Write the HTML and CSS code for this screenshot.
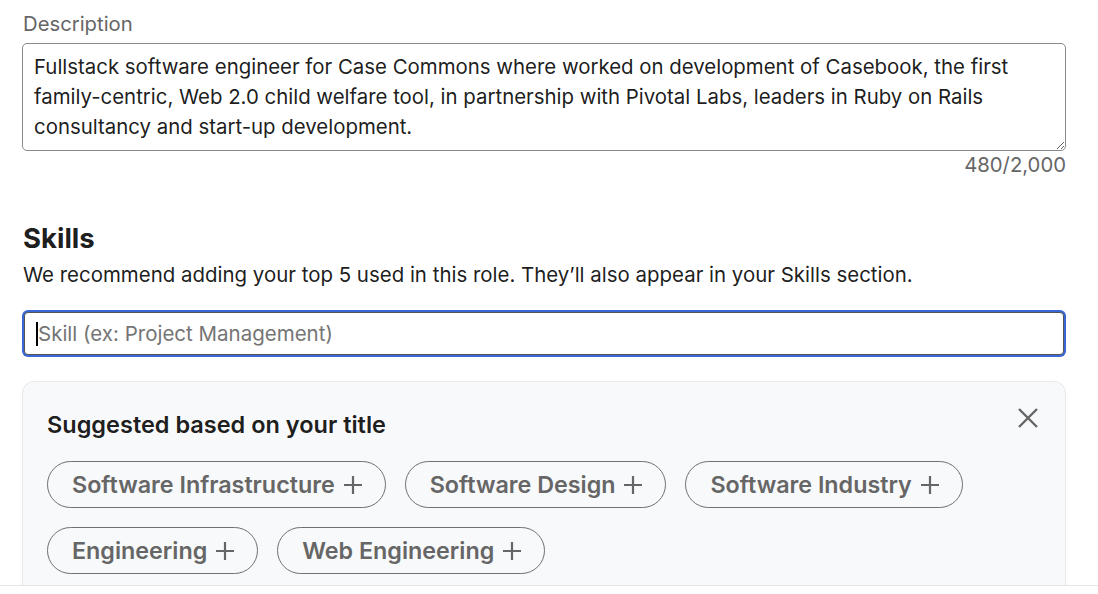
FILE: index.html
```html
<!DOCTYPE html>
<html lang="en">
<head>
<meta charset="utf-8">
<title>Edit position</title>
<link rel="stylesheet" href="styles.css">
</head>
<body>
<div class="scroll">
  <div class="content">
    <label class="label" for="desc">Description</label>
    <textarea id="desc" class="textarea" readonly>Fullstack software engineer for Case Commons where worked on development of Casebook, the first family-centric, Web 2.0 child welfare tool, in partnership with Pivotal Labs, leaders in Ruby on Rails consultancy and start-up development.</textarea>
    <div class="counter">480/2,000</div>

    <h2 class="heading">Skills</h2>
    <p class="sub">We recommend adding your top 5 used in this role. They’ll also appear in your Skills section.</p>
    <div class="input-wrap">
      <div class="input"><span class="caret"></span><span class="placeholder">Skill (ex: Project Management)</span></div>
    </div>

    <section class="card">
      <div class="card-head">
        <h3 class="card-title">Suggested based on your title</h3>
        <button class="close" aria-label="Dismiss">
          <svg width="24" height="24" viewBox="0 0 24 24"><path d="M3 3 L21 21 M21 3 L3 21" stroke="#666" stroke-width="2.4" fill="none"/></svg>
        </button>
      </div>
      <div class="pills">
        <button class="pill">Software Infrastructure <svg class="plus" width="20" height="20" viewBox="0 0 20 20"><path d="M10 1 V19 M1 10 H19" stroke="#666" stroke-width="2.2" fill="none"/></svg></button>
        <button class="pill">Software Design <svg class="plus" width="20" height="20" viewBox="0 0 20 20"><path d="M10 1 V19 M1 10 H19" stroke="#666" stroke-width="2.2" fill="none"/></svg></button>
        <button class="pill">Software Industry <svg class="plus" width="20" height="20" viewBox="0 0 20 20"><path d="M10 1 V19 M1 10 H19" stroke="#666" stroke-width="2.2" fill="none"/></svg></button>
        <button class="pill">Engineering <svg class="plus" width="20" height="20" viewBox="0 0 20 20"><path d="M10 1 V19 M1 10 H19" stroke="#666" stroke-width="2.2" fill="none"/></svg></button>
        <button class="pill">Web Engineering <svg class="plus" width="20" height="20" viewBox="0 0 20 20"><path d="M10 1 V19 M1 10 H19" stroke="#666" stroke-width="2.2" fill="none"/></svg></button>
      </div>
    </section>
  </div>
</div>
<div class="footer"></div>
</body>
</html>
```
FILE: styles.css
```css
* { box-sizing: border-box; }
html, body { margin: 0; padding: 0; background: #fff; }
body {
  font-family: Inter, "Noto Sans", "Liberation Sans", sans-serif;
  color: rgba(0,0,0,0.9);
  width: 1098px;
  height: 594px;
  overflow: hidden;
}
.scroll {
  height: 585px;
  overflow: hidden;
}
.content {
  padding: 10px 32px 0 22px;
}
.label {
  display: block;
  font-size: 20.3px;
  line-height: 28px;
  color: #666;
  margin: 0 0 5px 1px;
}
.textarea {
  display: block;
  width: 100%;
  height: 108px;
  margin: 0;
  padding: 8px 11px;
  border: 1px solid #8a8a8a;
  border-radius: 5px;
  font-family: inherit;
  font-size: 20.4px;
  line-height: 30px;
  color: rgba(0,0,0,0.9);
  background: #fff;
  resize: vertical;
  outline: none;
  overflow: hidden;
}
.counter {
  text-align: right;
  font-size: 20.3px;
  line-height: 24px;
  color: #666;
  margin-top: 2px;
}
.heading {
  margin: 45px 0 0 1px;
  font-size: 27.5px;
  line-height: 32px;
  font-weight: 700;
}
.sub {
  margin: 9px 0 0 1px;
  font-size: 20.45px;
  line-height: 24px;
}
.input-wrap {
  margin-top: 23px;
  padding: 2px;
  border-radius: 6px;
  background: #3868d6;
}
.input {
  display: flex;
  align-items: center;
  height: 43px;
  border: 1px solid #555;
  border-radius: 4px;
  background: #fff;
  padding-left: 11px;
}
.caret {
  width: 2px;
  height: 24px;
  background: #000;
}
.placeholder {
  font-size: 20.5px;
  color: #757575;
}
.card {
  margin-top: 24px;
  background: #f8f9fa;
  border: 1px solid #e8e9eb;
  border-radius: 12px;
  padding: 26px 24px 24px 24px;
  height: 260px;
}
.card-head {
  display: flex;
  justify-content: space-between;
  align-items: flex-start;
}
.card-title {
  margin: 0;
  font-size: 23.5px;
  line-height: 34px;
  font-weight: 600;
}
.close {
  border: 0;
  background: transparent;
  padding: 0;
  margin: -2px 1px 0 0;
  width: 24px;
  height: 24px;
  cursor: pointer;
}
.close svg { display: block; }
.pills {
  margin-top: 19px;
  display: flex;
  flex-wrap: wrap;
  gap: 19px;
}
.pill {
  display: inline-flex;
  align-items: center;
  gap: 8px;
  height: 47px;
  padding: 0 22px 0 24px;
  border: 1px solid #707070;
  border-radius: 24px;
  background: transparent;
  font-family: inherit;
  font-size: 23.3px;
  font-weight: 600;
  color: #666;
  cursor: pointer;
}
.plus { display: block; }
.footer {
  height: 9px;
  border-top: 1px solid #e6e6e6;
  background: #fff;
}
```
